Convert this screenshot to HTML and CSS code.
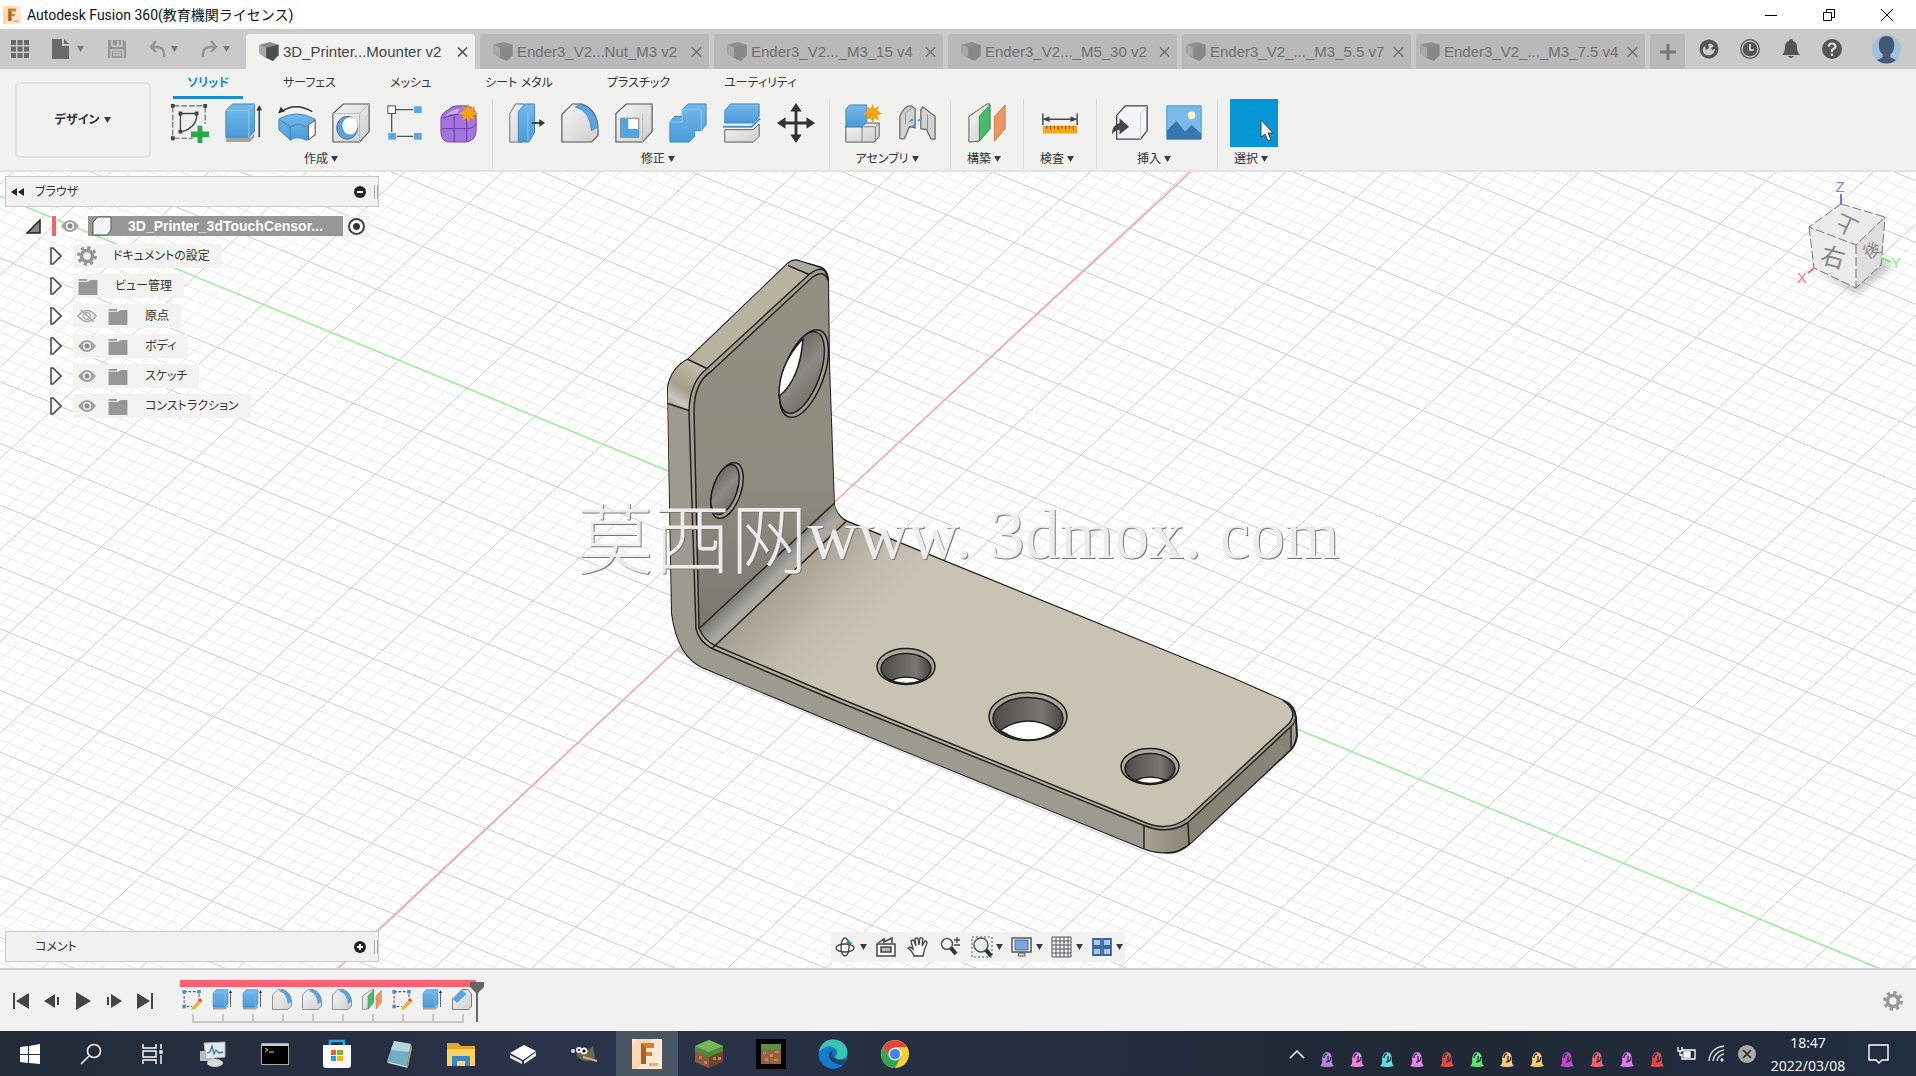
FILE: index.html
```html
<!DOCTYPE html>
<html lang="ja">
<head>
<meta charset="utf-8">
<title>Autodesk Fusion 360</title>
<link rel="stylesheet" href="styles.css">
</head>
<body>
<svg class="defs" aria-hidden="true">
  <defs>
    <linearGradient id="gBlue" x1="0" y1="0" x2="0" y2="1"><stop offset="0" stop-color="#74b9ea"/><stop offset="1" stop-color="#4a9bdb"/></linearGradient>
    <linearGradient id="gGrey" x1="0" y1="0" x2="1" y2="1"><stop offset="0" stop-color="#f6f6f6"/><stop offset="1" stop-color="#cfcfcf"/></linearGradient>
    <symbol id="doc" viewBox="0 0 20 20"><path d="M0 3 11 0l9 3v11l-6 6-7-3-7-5z" fill="#8e8e8e"/><path d="M7 6 20 3v11l-6 6-7-4z" fill="currentColor"/><path d="M0 3l7 3v10l-7-4z" fill="#a9a9a9"/></symbol>
    <symbol id="eye" viewBox="0 0 20 14"><path d="M1 7Q10-5 19 7 10 19 1 7z" fill="#a3a3a3"/><circle cx="10" cy="7" r="4" fill="#f1f1f1"/><circle cx="10" cy="7" r="2.500" fill="#8a8a8a"/></symbol>
    <symbol id="eyeoff" viewBox="0 0 20 14"><path d="M1 7Q10-4 19 7 10 18 1 7z" fill="none" stroke="#a8a8a8" stroke-width="1.300"/><circle cx="10" cy="7" r="3.500" fill="none" stroke="#a8a8a8" stroke-width="1.300"/><path d="M4 1l13 12" stroke="#a8a8a8" stroke-width="1.500"/></symbol>
    <symbol id="folder" viewBox="0 0 22 18"><path d="M1 1h9v2H1zM1 4h10l3-2h7v16H1z" fill="#979797"/></symbol>
    <symbol id="gear" viewBox="0 0 20 20"><circle cx="10" cy="10" r="5.500" fill="none" stroke="#979797" stroke-width="3.600"/><circle cx="10" cy="10" r="8.400" fill="none" stroke="#979797" stroke-width="3" stroke-dasharray="3.300 3.300"/></symbol>
    <symbol id="tri" viewBox="0 0 12 18"><path d="M1 1h2l8 8-8 8H1z" fill="#fafafa" stroke="#4a4a4a" stroke-width="1.600"/></symbol>
    <symbol id="caret" viewBox="0 0 8 7"><path d="M0 0h8L4 7z" fill="currentColor"/></symbol>
    <symbol id="cross" viewBox="0 0 12 12"><path d="M1 1l10 10M11 1L1 11" stroke="currentColor" stroke-width="1.500"/></symbol>
    <symbol id="extrude" viewBox="0 0 40 42"><path d="M2 36h26l4-5v5l-5 5H2z" fill="#a5a5a5"/><path d="M2 8 9 1h23v29l-6 6H2z" fill="url(#gBlue)" stroke="#3d86c0"/><path d="M2 8h24v28M26 8l6-7" fill="none" stroke="#8fcaf3"/><path d="M37 36V5" stroke="#333" stroke-width="1.500"/><path d="M34 8l3-6 3 6z" fill="#333"/></symbol>
    <symbol id="fillet" viewBox="0 0 40 42"><path d="M1 41V12L12 1h10q17 6 17 28v5l-7 7z" fill="url(#gGrey)" stroke="#555" stroke-width="1.200"/><path d="M15 4 20 1q17 5 19 24l-7 4Q31 9 15 4z" fill="#58a5e0" stroke="#3681bd" stroke-width=".8"/></symbol>
    <symbol id="planes" viewBox="0 0 40 42"><path d="M1 41V14L20 1h3v26L12 40z" fill="url(#gGrey)" stroke="#555"/><path d="M12 40V14L23 2v25z" fill="#45bd6d" stroke="#239a4d"/><path d="M28 40V14L39 2v25z" fill="#e99567" stroke="#db7641"/></symbol>
    <symbol id="sketch" viewBox="0 0 24 24"><path d="M3 3h17v13M3 3v17h9" fill="none" stroke="#555" stroke-width="1.200" stroke-dasharray="3 2"/><path d="M1 1h4v4H1zM18 1h4v4h-4zM1 18h4v4H1z" fill="#4b8dd8"/><path d="M12 21l8-9 3 3-8 8-4 1z" fill="#efb040"/><path d="M19 13l2-3 3 3-2 2z" fill="#ea5667"/></symbol>
    <symbol id="spark" viewBox="0 0 20 20"><path d="M10 0l2 5 5-3-2 5 5 3-5 2 2 5-5-2-2 5-2-5-5 2 2-5-5-2 5-3-2-5 5 3z" fill="#f7a30c"/></symbol>
    <symbol id="ghost" viewBox="0 0 16 18"><path d="M1 16q3-2 2-7Q4 2 8 2t5 6q-1 5 2 8-3 1-7 1t-7-1z" fill="currentColor"/><path d="M5 8q0-4 3-4M9 6v5M12 7q0 5-5 5" fill="none" stroke="#2e2e4b" stroke-width="1.300"/></symbol>
    <symbol id="fusion" viewBox="0 0 30 30"><path d="M0 0h30v30H0z" fill="#fee8d3"/><path d="M4 0h16L6 30H0V8z" fill="#fbd0aa" opacity=".7"/><path d="M9 25V4h13v5h-8v4h6v4h-6v8z" fill="#d4822b"/><path d="M9 25V4l5 5v16z" fill="#a96321"/><path d="M17 24h9v3h-9z" fill="#edae79"/></symbol>
  </defs>
</svg>

<header class="titlebar">
  <svg class="i18"><use href="#fusion"/></svg>
  <h1>Autodesk Fusion 360(教育機関ライセンス)</h1>
  <div class="wincontrols">
    <button aria-label="最小化"><svg width="14" height="14"><path d="M1 7.500h12" stroke="#000"/></svg></button>
    <button aria-label="元に戻す"><svg width="14" height="14" fill="none" stroke="#000"><path d="M1.500 4.500h8v8h-8zM4.500 4V1.500h8v8H10"/></svg></button>
    <button aria-label="閉じる"><svg width="14" height="14"><path d="M1 1l12 12M13 1L1 13" stroke="#000"/></svg></button>
  </div>
</header>

<div class="tabbar">
  <div class="quick">
    <button class="q1" aria-label="データパネル"><svg width="18" height="18" fill="#6a6a6a"><path d="M0 0h5v5H0zM6.500 0h5v5h-5zM13 0h5v5h-5zM0 6.500h5v5H0zM6.500 6.500h5v5h-5zM13 6.500h5v5h-5zM0 13h5v5H0zM6.500 13h5v5h-5zM13 13h5v5h-5z"/></svg></button>
    <button class="q2" aria-label="ファイル"><svg width="17" height="20"><path d="M0 0h10v7h7v13H0zM12 0l5 5h-5z" fill="#6a6a6a"/></svg><svg class="car"><use href="#caret"/></svg></button>
    <button class="q3" aria-label="保存"><svg width="18" height="18"><path d="M0 0h16l2 2v16H0z" fill="#969696"/><path d="M4 0v6h10V0M3 18V10h12v8M5 12.500h8M5 15h8M10 1v4" fill="none" stroke="#cacaca" stroke-width="1.500"/></svg></button>
    <button class="q4" aria-label="元に戻す"><svg width="17" height="18" fill="none" stroke="#969696" stroke-width="2.400"><path d="M7 1L2 7l5 5M2 7h7q7 1 6 10"/></svg><svg class="car"><use href="#caret"/></svg></button>
    <button class="q4" aria-label="やり直し"><svg width="17" height="18" fill="none" stroke="#969696" stroke-width="2.400"><path d="M10 1l5 6-5 5M15 7H8Q1 8 2 17"/></svg><svg class="car"><use href="#caret"/></svg></button>
  </div>
  <div class="tabs">
    <div class="tab on"><svg><use href="#doc"/></svg><span>3D_Printer...Mounter v2</span><button aria-label="閉じる"><svg><use href="#cross"/></svg></button></div>
    <div class="tab"><svg><use href="#doc"/></svg><span>Ender3_V2...Nut_M3 v2</span><button aria-label="閉じる"><svg><use href="#cross"/></svg></button></div>
    <div class="tab"><svg><use href="#doc"/></svg><span>Ender3_V2..._M3_15 v4</span><button aria-label="閉じる"><svg><use href="#cross"/></svg></button></div>
    <div class="tab"><svg><use href="#doc"/></svg><span>Ender3_V2..._M5_30 v2</span><button aria-label="閉じる"><svg><use href="#cross"/></svg></button></div>
    <div class="tab tight"><svg><use href="#doc"/></svg><span>Ender3_V2_..._M3_5.5 v7</span><button aria-label="閉じる"><svg><use href="#cross"/></svg></button></div>
    <div class="tab tight"><svg><use href="#doc"/></svg><span>Ender3_V2_..._M3_7.5 v4</span><button aria-label="閉じる"><svg><use href="#cross"/></svg></button></div>
    <button class="plus" aria-label="新規"><svg width="18" height="18"><path d="M9 1v16M1 9h16" stroke="#777" stroke-width="3"/></svg></button>
  </div>
  <div class="account">
    <button aria-label="拡張機能"><svg viewBox="0 0 20 20"><circle cx="10" cy="10" r="9.500" fill="#555"/><path d="M10 16a5 5 0 0 1-4-9l1 4 3-2-1-4q4-1 6 2l-3 2 1 2 3-1q-1 6-6 6z" fill="#cacaca"/></svg></button>
    <button aria-label="ジョブの状態"><svg viewBox="0 0 20 20"><circle cx="10" cy="10" r="9.300" fill="none" stroke="#555" stroke-width="1.300"/><circle cx="10" cy="10" r="7.300" fill="#555"/><path d="M10 5v6h4" fill="none" stroke="#ddd" stroke-width="1.700"/></svg></button>
    <button aria-label="通知"><svg viewBox="0 0 20 20"><path d="M10 0q2 0 2 2 4 1 4 6 0 5 3 8H1q3-3 3-8 0-5 4-6 0-2 2-2zM7 17h6q-3 4-6 0z" fill="#555"/></svg></button>
    <button aria-label="ヘルプ"><svg viewBox="0 0 20 20"><circle cx="10" cy="10" r="10" fill="#555"/><path d="M6.500 7.500Q7 4.500 10 4.500t3.500 3Q13.500 9 10 11v2M10 14.500v2.500" fill="none" stroke="#ddd" stroke-width="2.200"/></svg></button>
    <button class="avatar" aria-label="アカウント"><svg viewBox="0 0 30 30"><circle cx="15" cy="15" r="15" fill="#a5bfdf"/><path d="M7 10Q7 1 15 1t8 9q0 7-4 10v3l6 3q-10 7-20 0l6-3v-3q-4-3-4-10z" fill="#465972"/></svg></button>
  </div>
</div>

<section class="ribbon">
  <button class="workspace">デザイン<svg class="car"><use href="#caret"/></svg></button>
  <div class="ribbon-main">
    <nav class="rtabs">
      <a href="#" class="on">ソリッド</a><a href="#">サーフェス</a><a href="#">メッシュ</a><a href="#">シート メタル</a><a href="#">プラスチック</a><a href="#">ユーティリティ</a>
    </nav>
    <div class="groups">
      <div class="group">
        <div class="tools">
          <button aria-label="スケッチを作成"><svg viewBox="0 0 40 42"><path d="M4 3h32M3 4v32M4 37h20M37 4v18" stroke="#666" stroke-width="1.200" stroke-dasharray="6 2"/><path d="M11 11h17M11 11v20M28 11q1 14-15 19" fill="none" stroke="#444" stroke-width="1.400"/><path d="M1 1h4v4H1zM35 1h4v4h-4zM1 35h4v4H1zM9 9h4v4H9zM26 9h4v4h-4zM9 28h4v4H9z" fill="#444"/><path d="M29 24h5v6h7v6h-7v6h-5v-6h-7v-6h7z" fill="#27a84c"/></svg></button>
          <button aria-label="押し出し"><svg><use href="#extrude"/></svg></button>
          <button aria-label="回転"><svg viewBox="0 0 40 42"><path d="M1 17q18-11 38 0v17l-9 5q-11-5-17 0L1 28z" fill="url(#gBlue)" stroke="#3d86c0"/><path d="M1 17l12 8v14M13 25q8-5 17 0" fill="none" stroke="#3d86c0"/><path d="M32 23l7-5v15l-7 6z" fill="#fff" stroke="#555"/><path d="M4 9q14-10 32 0" fill="none" stroke="#333" stroke-width="1.500"/><path d="M0 11l3-7 4 5z" fill="#333"/></svg></button>
          <button aria-label="穴"><svg viewBox="0 0 40 42"><path d="M1 41V11L12 1h27v29L29 41z" fill="url(#gGrey)" stroke="#555" stroke-width="1.200"/><path d="M1 11h28v30M29 11L39 1" fill="none" stroke="#bbb"/><ellipse cx="16" cy="26" rx="11" ry="12" fill="#58a5e0" stroke="#666"/><ellipse cx="19" cy="24" rx="8" ry="9" fill="#fff"/></svg></button>
          <button aria-label="パターン"><svg viewBox="0 0 40 42"><path d="M6 7h28M6 7v28h28" fill="none" stroke="#555" stroke-width="1.400"/><path d="M2 3h8v8H2z" fill="#fff" stroke="#444"/><path d="M29 3h9v8h-9zM2 31h9v8H2zM29 31h9v8h-9z" fill="#5aa7e2" stroke="#f1f1f0"/></svg></button>
          <button aria-label="フォームを作成"><svg viewBox="0 0 40 42"><path d="M1 17q0-6 8-10 3-4 10-4h10q10 3 9 12v15q-1 10-11 11H12Q1 42 1 30z" fill="#a374dd" stroke="#7646b6"/><path d="M3 16q10-4 16-4M15 14v27M2 27h26q7 0 10-5M28 13v28" fill="none" stroke="#7342b4" stroke-width="1.300"/><path d="M5 15q6-9 16-9l-3 5q-9 0-13 4z" fill="#cbb0ee"/><use href="#spark" x="20" y="1" width="20" height="20"/></svg></button>
        </div>
        <button class="gl">作成<svg class="car"><use href="#caret"/></svg></button>
      </div>
      <div class="group">
        <div class="tools">
          <button aria-label="プレス/プル"><svg viewBox="0 0 40 42"><path d="M3 41V11L9 1h9v38l-3 2z" fill="url(#gGrey)" stroke="#666"/><path d="M12 41V9l7-8h10v30l-6 10z" fill="url(#gBlue)" stroke="#3d86c0"/><path d="M22 10v30" stroke="#8fcaf3"/><path d="M26 21h9" stroke="#333" stroke-width="1.800"/><path d="M34 17l6 4-6 4z" fill="#333"/></svg></button>
          <button aria-label="フィレット"><svg><use href="#fillet"/></svg></button>
          <button aria-label="シェル"><svg viewBox="0 0 40 42"><path d="M1 41V11L12 1h27v29L29 41z" fill="url(#gGrey)" stroke="#555" stroke-width="1.200"/><path d="M6 16h19v20H6z" fill="#fff" stroke="#777"/><path d="M6 16h8v11h11v9H6z" fill="#55a5df"/><path d="M29 11v30" stroke="#bbb"/></svg></button>
          <button aria-label="結合"><svg viewBox="0 0 40 42"><path d="M1 41V20l5-6h8V7l6-6h19v22l-5 6h-7v6l-6 6z" fill="url(#gBlue)" stroke="#3d86c0"/><path d="M1 20h13V7h20v22" fill="none" stroke="#8fcaf3"/></svg></button>
          <button aria-label="分割"><svg viewBox="0 0 40 42"><path d="M2 8l6-7h30v13l-6 7H2z" fill="url(#gBlue)" stroke="#3d86c0"/><path d="M0 25h30l9-9" fill="none" stroke="#4798d6" stroke-width="2"/><path d="M2 28h30l6-6v13l-6 6H2z" fill="url(#gGrey)" stroke="#555"/></svg></button>
          <button aria-label="移動"><svg viewBox="0 0 40 42"><path d="M20 6v30M5 21h30" stroke="#333" stroke-width="3"/><path d="M14 9l6-9 6 9zM14 33l6 9 6-9zM9 15l-9 6 9 6zM31 15l9 6-9 6z" fill="#333"/></svg></button>
        </div>
        <button class="gl">修正<svg class="car"><use href="#caret"/></svg></button>
      </div>
      <div class="group">
        <div class="tools">
          <button aria-label="新規コンポーネント"><svg viewBox="0 0 40 42"><path d="M2 41V25h17v-4h18v14l-5 6z" fill="url(#gGrey)" stroke="#555"/><path d="M19 25v16M19 25h14v16M33 25l4-4" fill="none" stroke="#777"/><path d="M2 7l4-5h18v18l-5 5H2z" fill="url(#gBlue)" stroke="#3d86c0"/><use href="#spark" x="20" y="1" width="20" height="20"/></svg></button>
          <button aria-label="ジョイント"><svg viewBox="0 0 40 42"><path d="M2 37V14Q7 2 14 3l4 3v20l-6-1-5 12-3 1zM39 38V14L26 4l-2 3v20l6 1 5 10z" fill="#d3d3d3" stroke="#666" stroke-width="1.300"/><path d="M8 22V10l7-5M31 12v16" fill="none" stroke="#888"/><path d="M12 20l4-3M25 16l-4 3M14 25l4-2" stroke="#4b9fdf" stroke-width="2"/></svg></button>
        </div>
        <button class="gl">アセンブリ<svg class="car"><use href="#caret"/></svg></button>
      </div>
      <div class="group one">
        <div class="tools"><button aria-label="オフセット平面"><svg><use href="#planes"/></svg></button></div>
        <button class="gl">構築<svg class="car"><use href="#caret"/></svg></button>
      </div>
      <div class="group one">
        <div class="tools"><button aria-label="計測"><svg viewBox="0 0 40 42"><path d="M2 11v12M38 11v12M3 17h34" stroke="#444" stroke-width="1.500"/><path d="M2 17l7-3v6zM38 17l-7-3v6z" fill="#444"/><path d="M2 24h36v8H2z" fill="#f6a51c"/><path d="M6 24v3m4-3v4m4-4v3m4-3v4m4-4v3m4-3v4m4-4v3m4-3v4" stroke="#6b4a10"/></svg></button></div>
        <button class="gl">検査<svg class="car"><use href="#caret"/></svg></button>
      </div>
      <div class="group">
        <div class="tools">
          <button aria-label="派生を挿入"><svg viewBox="0 0 40 42"><path d="M6 38V13L15 3h23v26l-7 9z" fill="#f3f5fa" stroke="#444" stroke-width="1.400"/><path d="M31 11v27M31 11l7-8" stroke="#c9ccd5"/><path d="M1 33q0-10 8-12v-5l10 9-10 8v-5q-5 0-8 5z" fill="#444"/></svg></button>
          <button aria-label="キャンバス"><svg viewBox="0 0 40 42"><path d="M2 3h36v35H2z" fill="#79bbeb" stroke="#4d8dbd"/><path d="M2 29l10-10 9 11 7-7 10 9v6H2z" fill="#3478ae"/><circle cx="28" cy="13" r="4" fill="#fbf6b8"/></svg></button>
        </div>
        <button class="gl">挿入<svg class="car"><use href="#caret"/></svg></button>
      </div>
      <div class="group one last">
        <div class="tools"><button class="picked" aria-label="選択"><svg viewBox="0 0 48 48"><path d="M8 8h26v26H8z" fill="none" stroke="#109bc4" stroke-dasharray="3 2"/><path d="M31 21v17l4-3 3 7 3-1-3-7h5z" fill="#fff" stroke="#444"/></svg></button></div>
        <button class="gl">選択<svg class="car"><use href="#caret"/></svg></button>
      </div>
    </div>
  </div>
</section>

<main class="stage">
  <svg class="scene" viewBox="0 171 1916 797" preserveAspectRatio="xMidYMid slice" aria-label="モデル">
    <defs>
      <linearGradient id="mFace" x1="0" y1="0" x2="0" y2="1"><stop offset="0" stop-color="#928f83"/><stop offset=".6" stop-color="#8e8b80"/><stop offset="1" stop-color="#7a7771"/></linearGradient>
      <linearGradient id="mFloor" gradientUnits="userSpaceOnUse" x1="770" y1="575" x2="850" y2="650"><stop offset="0" stop-color="#a19b8f"/><stop offset=".6" stop-color="#c1bbad"/><stop offset="1" stop-color="#c9c3b4"/></linearGradient>
      <linearGradient id="mBend" gradientUnits="userSpaceOnUse" x1="760" y1="568" x2="780" y2="588"><stop offset="0" stop-color="#77746d"/><stop offset=".55" stop-color="#a4a6a3"/><stop offset=".8" stop-color="#b3a996"/><stop offset="1" stop-color="#9f998d"/></linearGradient>
      <linearGradient id="mCorner" x1="0" y1="1" x2=".5" y2="0"><stop offset="0" stop-color="#8c8c87"/><stop offset=".25" stop-color="#c9c9c2"/><stop offset=".5" stop-color="#a79d8c"/><stop offset="1" stop-color="#c3baa8"/></linearGradient>
      <linearGradient id="mHole" x1="0" y1="0" x2="1" y2="0"><stop offset="0" stop-color="#4d4b47"/><stop offset=".7" stop-color="#7a7872"/><stop offset="1" stop-color="#454440"/></linearGradient>
      <linearGradient id="mBore" x1="0" y1="0" x2="1" y2="1"><stop offset="0" stop-color="#5f5d58"/><stop offset=".5" stop-color="#8d8b85"/><stop offset="1" stop-color="#6a6861"/></linearGradient>
      <linearGradient id="mEnd" x1="0" y1="0" x2="1" y2="0"><stop offset="0" stop-color="#aaa497"/><stop offset=".4" stop-color="#9c968a"/><stop offset="1" stop-color="#8a8679"/></linearGradient>
    </defs>
    <path id="minor" class="minor"/>
    <path id="major" class="major"/>
    <path d="M338 968 678 648 833 503 1191 171" class="axis-x"/>
    <path d="M-60 171 667 470 1296 728 1880 968" class="axis-y"/>
    <path d="M675 650l35 18-8-28z" fill="#cfcfcf"/>
    <g>
      <path d="M788 263q6-5 12-2l21 6q6 3 7 11l1 85 5 142q3 11 13 16l386 157 50 22q12 5 13 17l1 18q-1 8-5 13l-102 95q-12 11-25 9-11 0-21-4L840 724 703 667q-25-11-31-54l-2-110-2-116q3-19 20-28z" fill="#a39e92" stroke="#1d1d1b" stroke-width="2"/>
      <path d="M668 403l21 7 7 218q3 13 16 20l128 54 304 123v23L840 724 703 667q-25-11-31-54z" fill="#9d9a8f"/>
      <path d="M668 403v-16q3-19 20-28l19 9q-17 13-18 42z" fill="url(#mCorner)"/>
      <path d="M688 359l100-96 21 11-102 94z" fill="#b8b2a1"/>
      <path d="M788 263q6-5 12-2l22 7-13 6z" fill="#aaa99f"/>
      <path d="M694 411q0-29 17-40l101-94q12-9 16 3l1 83 5 140-135 124z" fill="url(#mFace)"/>
      <path d="M699 628l135-125q2 12 12 18L712 648q-10-6-13-20z" fill="url(#mBend)"/>
      <path d="M712 648l134-127 387 157 50 22q14 7 7 23l-103 94q-20 15-42 5L840 698z" fill="url(#mFloor)"/>
      <path d="M1144 825q24 10 44-3v22q-22 13-44 4z" fill="url(#mEnd)"/>
      <path d="M1188 822l102-95v22l-100 94z" fill="#878376"/>
      <path d="M696 628q3 13 16 20l128 54 304 123v-3L840 698 715 645q-11-5-16-17z" fill="#b7b1a2"/>
      <g class="edge">
        <path d="M689 410q1-29 18-42l102-94q10-8 16-4M689 410l7 218q3 13 16 20l128 54 304 123q24 10 44-3l102-95q5-4 6-10"/>
        <path d="M694 411q0-29 17-40l101-94q12-9 16 3M694 411l5 217q5 12 16 17l125 53 305 124q24 10 43-5l101-94q10-12-6-23"/>
        <path d="M668 403l21 7M688 359l19 9M788 265l21 9M699 628l135-125M712 648l134-127M1144 825v23M1188 822l1 22M1291 726v22"/>
      </g>
      <g stroke="#1d1d1b" stroke-width="1.500">
        <ellipse cx="804" cy="373" rx="20" ry="46" transform="rotate(20 804 373)" fill="#a19e93"/>
        <ellipse cx="802" cy="372" rx="18" ry="43" transform="rotate(20 802 372)" fill="url(#mBore)"/>
        <path d="M803 338q-3 41-24 58-1-31 24-58z" fill="#fff"/>
        <ellipse cx="727" cy="490" rx="14" ry="29" transform="rotate(19 727 490)" fill="#a19e93"/>
        <ellipse cx="725" cy="489" rx="12" ry="26" transform="rotate(19 725 489)" fill="url(#mBore)"/>
        <ellipse cx="906" cy="666" rx="29" ry="18" fill="#aea89b"/><ellipse cx="906" cy="668" rx="25" ry="15" fill="url(#mHole)"/><path d="M891 680q15-7 31 0-16 6-31 0z" fill="#fff"/>
        <ellipse cx="1028" cy="716" rx="39" ry="24" fill="#aea89b"/><ellipse cx="1028" cy="718" rx="35" ry="21" fill="url(#mHole)"/><path d="M1000 730q28-19 57 0-28 19-57 0z" fill="#fff"/>
        <ellipse cx="1150" cy="766" rx="29" ry="18" fill="#aea89b"/><ellipse cx="1150" cy="768" rx="25" ry="15" fill="url(#mHole)"/><path d="M1135 780q15-7 31 0-16 6-31 0z" fill="#fff"/>
      </g>
    </g>
  </svg>

  <div class="overlay">
    <div class="top">
      <aside class="browser">
        <div class="panel"><button aria-label="折りたたむ"><svg width="13" height="8"><path d="M6 0v8L0 4zM13 0v8L7 4z" fill="#222"/></svg></button><h2>ブラウザ</h2><button class="end" aria-label="閉じる"><svg width="12" height="12"><circle cx="6" cy="6" r="6" fill="#222"/><path d="M3 6h6" stroke="#fff" stroke-width="2"/></svg></button><i></i></div>
        <ul class="tree">
          <li class="root"><svg width="15" height="15"><path d="M14 1v13H1z" fill="#888" stroke="#222" stroke-width="1.500"/></svg><b></b><svg class="eye"><use href="#eye"/></svg><span class="sel"><svg width="20" height="20"><path d="M1 19V6l5-5h13v13l-4 5z" fill="#f4f4f4" stroke="#555"/></svg>3D_Printer_3dTouchCensor...</span><label class="radio"><input type="radio" checked aria-label="アクティブ"></label></li>
          <li><svg class="tw"><use href="#tri"/></svg><span><svg class="g20"><use href="#gear"/></svg>ドキュメントの設定</span></li>
          <li><svg class="tw"><use href="#tri"/></svg><span><svg class="fo"><use href="#folder"/></svg>ビュー管理</span></li>
          <li><svg class="tw"><use href="#tri"/></svg><span><svg class="eye"><use href="#eyeoff"/></svg><svg class="fo"><use href="#folder"/></svg>原点</span></li>
          <li><svg class="tw"><use href="#tri"/></svg><span><svg class="eye"><use href="#eye"/></svg><svg class="fo"><use href="#folder"/></svg>ボディ</span></li>
          <li><svg class="tw"><use href="#tri"/></svg><span><svg class="eye"><use href="#eye"/></svg><svg class="fo"><use href="#folder"/></svg>スケッチ</span></li>
          <li><svg class="tw"><use href="#tri"/></svg><span><svg class="eye"><use href="#eye"/></svg><svg class="fo"><use href="#folder"/></svg>コンストラクション</span></li>
        </ul>
      </aside>
      <svg class="cube" viewBox="1790 176 116 124" width="116" height="124">
        <defs><filter id="soft"><feGaussianBlur stdDeviation="4"/></filter></defs>
        <path d="M1818 268l38 26 36-28-30-20z" fill="#999" opacity=".6" filter="url(#soft)"/>
        <path d="M1841 204l44 13-4 48-25 23-42-20-5-41z" fill="#ececec"/>
        <path d="M1856 245l29-28-4 48-25 23z" fill="#dedede"/>
        <path d="M1841 204l44 13-29 28-47-18zM1856 245v43M1809 227l5 41 42 20 25-23 4-48" fill="none" stroke="#777" stroke-dasharray="9 3"/>
        <path d="M1841 194v10" stroke="#7b6df0" stroke-width="2"/><path d="M1814 268l-6 5" stroke="#ef6a72" stroke-width="2"/><path d="M1881 258l10 4" stroke="#7be87b" stroke-width="2"/>
        <g text-anchor="middle" fill="#888"><text x="1847" y="233" font-size="22" transform="rotate(205 1847 225)">上</text><text x="1833" y="266" font-size="24" transform="rotate(15 1833 258)">右</text><text x="1872" y="256" font-size="17" transform="rotate(-30 1872 250)">後</text></g>
        <g text-anchor="middle" font-size="15" class="ax"><text x="1840" y="192" fill="#8a7ef5">Z</text><text x="1802" y="283" fill="#f47c83">X</text><text x="1896" y="268" fill="#8ff08f">Y</text></g>
      </svg>
    </div>
    <div class="bottom">
      <div class="panel comment"><h2>コメント</h2><button class="end" aria-label="追加"><svg width="12" height="12"><circle cx="6" cy="6" r="6" fill="#222"/><path d="M3 6h6M6 3v6" stroke="#fff" stroke-width="2"/></svg></button><i></i></div>
      <div class="navbar">
        <button class="wide" aria-label="オービット"><svg viewBox="0 0 22 22" fill="#fff" stroke="#444" stroke-width="1.300"><ellipse cx="10" cy="11" rx="4" ry="9"/><ellipse cx="10" cy="12" rx="9" ry="4" fill="none"/><path d="M14 4v6M11 7h6" stroke="#2f74b8"/></svg><svg class="car"><use href="#caret"/></svg></button>
        <button aria-label="ビューを表示"><svg viewBox="0 0 22 22" fill="none" stroke="#444" stroke-width="1.500"><path d="M2 8h18v12H2z" fill="#fff"/><path d="M6 11h10v5H6z" fill="#bbb"/><path d="M3 7l6-4v3l8-4v5"/></svg></button>
        <button aria-label="画面移動"><svg viewBox="0 0 22 22"><path d="M7 20q-1-4-6-8 2-2 5 1L4 5q2-2 3 0l2 5-1-7q2-2 3 0l1 6 1-7q2-1 3 1l-1 7 3-5q2 0 2 2-3 6-4 13z" fill="#fff" stroke="#444" stroke-width="1.300"/></svg></button>
        <button aria-label="ズーム"><svg viewBox="0 0 22 22"><circle cx="8" cy="8" r="5.500" fill="#f7f7f7" stroke="#555" stroke-width="1.500"/><path d="M12 12l5 6" stroke="#333" stroke-width="4"/><path d="M18 1v6M15 4h6M15 9h6" stroke="#444" stroke-width="1.300"/></svg></button>
        <button class="wide" aria-label="フィット"><svg viewBox="0 0 22 22"><path d="M1 1h20v20H1z" fill="none" stroke="#555" stroke-dasharray="2 2"/><circle cx="10" cy="9" r="7" fill="#e9f1ee" stroke="#555" stroke-width="1.500"/><path d="M15 14l5 6" stroke="#333" stroke-width="4"/></svg><svg class="car"><use href="#caret"/></svg></button>
        <button class="wide" aria-label="表示設定"><svg viewBox="0 0 22 22"><path d="M1 2h19v14H1z" fill="#fff" stroke="#555" stroke-width="1.500"/><path d="M4 4h13v10H4z" fill="#7ba7df" stroke="#466b9d"/><path d="M8 17h6v3H7z" fill="#ddd" stroke="#555"/></svg><svg class="car"><use href="#caret"/></svg></button>
        <button class="wide" aria-label="グリッド"><svg viewBox="0 0 22 22"><path d="M1 1h19v20H1zM5 1v20M9 1v20M13 1v20M17 1v20M1 5h19M1 9h19M1 13h19M1 17h19" fill="#f2f2fb" stroke="#555"/></svg><svg class="car"><use href="#caret"/></svg></button>
        <button class="wide" aria-label="ビューポート"><svg viewBox="0 0 22 22"><path d="M2 3h8v7H2zM12 3h8v7h-8zM2 12h8v7H2zM12 12h8v7h-8z" fill="#a9c6ec" stroke="#3f6796" stroke-width="1.800"/></svg><svg class="car"><use href="#caret"/></svg></button>
      </div>
    </div>
  </div>
</main>

<footer class="timeline">
  <div class="play">
    <button aria-label="先頭"><svg viewBox="0 0 18 18"><path d="M1 1h2v16H1zM17 1v16L4 9z"/></svg></button>
    <button aria-label="前へ"><svg viewBox="0 0 18 18"><path d="M12 2v14L1 9zM14 5h2v8h-2z"/></svg></button>
    <button aria-label="再生"><svg viewBox="0 0 18 18"><path d="M2 0v18l15-9z"/></svg></button>
    <button aria-label="次へ"><svg viewBox="0 0 18 18"><path d="M6 2v14l11-7zM2 5h2v8H2z"/></svg></button>
    <button aria-label="末尾"><svg viewBox="0 0 18 18"><path d="M15 1h2v16h-2zM1 1v16l13-8z"/></svg></button>
  </div>
  <div class="track">
    <div class="red"></div>
    <div class="feats">
      <svg><use href="#sketch"/></svg><svg><use href="#extrude"/></svg><svg><use href="#extrude"/></svg><svg><use href="#fillet"/></svg><svg><use href="#fillet"/></svg><svg><use href="#fillet"/></svg><svg><use href="#planes"/></svg><svg><use href="#sketch"/></svg><svg><use href="#extrude"/></svg><svg viewBox="0 0 40 42"><path d="M1 41V20L20 1h12l7 9v24l-6 7z" fill="url(#gGrey)" stroke="#555" stroke-width="1.500"/><path d="M2 20 20 2l9 8-19 18z" fill="#58a5e0"/></svg>
    </div>
    <div class="ticks"><i></i><i></i><i></i><i></i><i></i><i></i><i></i><i></i><i></i></div>
    <svg class="marker" width="16" height="40"><path d="M1 0h14v5L9 11v29H7V11L1 5z" fill="#666"/></svg>
  </div>
  <button class="set" aria-label="設定"><svg class="g20"><use href="#gear"/></svg></button>
</footer>

<div class="taskbar">
  <div class="apps">
    <button class="n" aria-label="スタート"><svg width="20" height="20" fill="#fff"><path d="M0 3l8-1v8H0zM9 2l11-2v10H9zM0 11h8v8l-8-1zM9 11h11v9L9 19z"/></svg></button>
    <button class="n" aria-label="検索"><svg width="22" height="22" fill="none" stroke="#fff" stroke-width="1.500"><circle cx="14" cy="8" r="6.500"/><path d="M9 13l-8 8"/></svg></button>
    <button class="n" aria-label="タスクビュー"><svg width="22" height="20" fill="none" stroke="#fff" stroke-width="1.400"><path d="M2 0v4h13V0M2 20v-4h13v4M2 7h13v6H2zM20 0v5M20 11v9"/><path d="M19 7h2v2h-2z"/></svg></button>
    <button aria-label="モニター"><svg width="28" height="28"><path d="M1 11h14v10H1z" fill="#b9c0c4"/><path d="M5 3l21-1v15l-19 2z" fill="#e4ebef" stroke="#a9b3b8"/><path d="M8 13l3-1 2-6 2 8 2-4 3 3 4-1" fill="none" stroke="#3279a8" stroke-width="1.300"/><ellipse cx="16" cy="23" rx="8" ry="4" fill="#d6d9da"/></svg></button>
    <button aria-label="端末"><svg width="28" height="22"><path d="M.5.500h27v21H.5z" fill="#000" stroke="#aaa"/><path d="M1 2h26" stroke="#ccc" stroke-width="2"/><path d="M4 5l3 2-3 2M8 9h5" fill="none" stroke="#ccc"/></svg></button>
    <button aria-label="ストア"><svg width="30" height="30"><path d="M8 8V2h14v6" fill="none" stroke="#29a5e5" stroke-width="2.500"/><path d="M1 6h28v20q0 3-3 3H4q-3 0-3-3z" fill="#fafafa"/><path d="M9 11h5v5H9z" fill="#ed5a32"/><path d="M15 11h6v5h-6z" fill="#7fba26"/><path d="M9 17h5v5H9z" fill="#28a0df"/><path d="M15 17h6v5h-6z" fill="#f5b51f"/></svg></button>
    <button aria-label="メモ帳"><svg width="28" height="28"><path d="M9 1l17 3-4 22-20-5z" fill="#6fb0c2"/><path d="M9 1l17 3-2 8L6 10z" fill="#b5d6dc"/><path d="M2 21l20 5 1 2-20-5z" fill="#d9d9d9"/><path d="M26 4l1 4-4 19-1-1z" fill="#b4a56b"/></svg></button>
    <button aria-label="エクスプローラー"><svg width="30" height="26"><path d="M1 2h11l3 3h14v20H1z" fill="#e5a72a"/><path d="M1 8h28v17H1z" fill="#fbd35e"/><path d="M6 25V15h18v10h-5v-5h-8v5z" fill="#3b88c8"/></svg></button>
    <button aria-label="ドライブ"><svg width="28" height="22"><path d="M1 10L15 2l12 6-13 9z" fill="#fff"/><path d="M1 12l12 6v3L1 15zM15 18l12-9v4L15 21z" fill="#e9e9e9"/></svg></button>
    <button aria-label="GIMP"><svg width="30" height="22"><path d="M7 8q5 5 16-5l2 12q-6 5-13 2-7-3-5-9z" fill="#6d6350"/><circle cx="3" cy="8" r="2" fill="#ddd"/><circle cx="9" cy="7" r="3" fill="#eee"/><circle cx="14" cy="8" r="3.500" fill="#eee"/><circle cx="9" cy="7" r="1" /><circle cx="14" cy="8" r="1.500"/><path d="M13 14l14 4" stroke="#ccb680" stroke-width="2"/></svg></button>
    <button class="cur" aria-label="Fusion 360"><svg width="30" height="30"><use href="#fusion"/></svg></button>
    <button aria-label="Minecraft"><svg width="30" height="30"><path d="M1 8l14 6v15L1 23z" fill="#8a5c3d"/><path d="M29 8l-14 6v15l14-6z" fill="#6b452d"/><path d="M15 1l14 6v5l-14 6L1 12V7z" fill="#4e8c3a"/><path d="M15 1l14 6-14 6L1 7z" fill="#77b655"/><path d="M5 17h3v3H5zM10 22h3v3h-3zM19 18h3v3h-3zM24 18h3v3h-3z" fill="#b98256"/></svg></button>
    <button aria-label="Minecraft"><svg width="30" height="30"><path d="M0 0h30v30H0z"/><path d="M5 5h20v20H5z" fill="#97613b"/><path d="M5 5h20v4l-3 2-3-2-3 3-3-2-3 2-5-2z" fill="#5a9140"/><path d="M7 13h3v2H7zM14 15h3v3h-3zM19 12h4v2h-4zM9 19h3v3H9zM18 20h4v2h-4z" fill="#c08a5c"/></svg></button>
    <button aria-label="Edge"><svg viewBox="0 0 30 30" width="30" height="30"><circle cx="15" cy="15" r="14.500" fill="#1476c6"/><path d="M1 13Q4 0 16 .5 29 2 29.500 14q-1 6-8 6-5 0-4-3 3-2 1-6Q11 3 1 13z" fill="#38c8b0"/><path d="M1 13Q11 4 17 10q-6 0-6 7 1 9 14 9-9 7-18 1Q1 22 1 13z" fill="#127bd2"/><path d="M11 17q0-5 4-6-2 4 1 8 5 4 12 1-1 4-4 6-12-1-13-9z" fill="#222c3d" opacity=".65"/></svg></button>
    <button aria-label="Chrome"><svg viewBox="0 0 30 30" width="30" height="30"><circle cx="15" cy="15" r="14" fill="#fbce34"/><path d="M3 8a14 14 0 0 1 24 0H15l-6 10z" fill="#e5443a"/><path d="M3 8a14 14 0 0 0 12 21l6-11H9z" fill="#30a552"/><circle cx="15" cy="15" r="6.500" fill="#fff"/><circle cx="15" cy="15" r="5.200" fill="#4384ee"/></svg></button>
  </div>
  <div class="tray">
    <button aria-label="表示"><svg width="16" height="10"><path d="M1 9l7-7 7 7" fill="none" stroke="#fff" stroke-width="1.500"/></svg></button>
    <svg class="gh" color="#b787dd"><use href="#ghost"/></svg><svg class="gh" color="#ee81dc"><use href="#ghost"/></svg><svg class="gh" color="#5ce3dc"><use href="#ghost"/></svg><svg class="gh" color="#e885ec"><use href="#ghost"/></svg><svg class="gh" color="#e04b45"><use href="#ghost"/></svg><svg class="gh" color="#5de570"><use href="#ghost"/></svg><svg class="gh" color="#f3cb7b"><use href="#ghost"/></svg><svg class="gh" color="#f3cf6d"><use href="#ghost"/></svg><svg class="gh" color="#c548cb"><use href="#ghost"/></svg><svg class="gh" color="#ed6467"><use href="#ghost"/></svg><svg class="gh" color="#dc7cec"><use href="#ghost"/></svg><svg class="gh" color="#e64747"><use href="#ghost"/></svg>
    <button aria-label="電源"><svg width="20" height="16" fill="none" stroke="#fff" stroke-width="1.300"><path d="M5 4h13v9H5V8M1 1v4h4V1M3 5v4h2"/><path d="M7 6h6v5H7z" fill="#fff"/></svg></button>
    <button aria-label="ネットワーク"><svg width="18" height="18" fill="none" stroke="#ddd" stroke-width="1.300"><path d="M1 16Q2 3 16 1M5 16Q6 7 16 5M9 16q1-6 7-7"/><circle cx="14" cy="15" r="1" fill="#fff"/></svg></button>
    <button aria-label="状態"><svg width="18" height="18"><circle cx="9" cy="9" r="9" fill="#aaa"/><path d="M5 5l8 8M13 5l-8 8" stroke="#222" stroke-width="1.600"/></svg></button>
    <time>18:47<br>2022/03/08</time>
    <button class="note" aria-label="アクション センター"><svg width="22" height="20"><path d="M1 1h19v15h-6l-3 3-3-3H1z" fill="none" stroke="#fff" stroke-width="1.400"/></svg></button>
  </div>
</div>

<div class="watermark"><span>莫西网</span>www. 3dmox. com</div>
<script src="grid.js"></script>
</body>
</html>
```
FILE: styles.css
```css
* { box-sizing: border-box; }
html, body { height: 100%; }
body {
  margin: 0;
  display: flex;
  flex-direction: column;
  overflow: hidden;
  font: 12px/16px "Liberation Sans", "Noto Sans CJK JP", sans-serif;
  font-feature-settings: "palt";
  color: #333;
  background: #f1f1f0;
}
button {
  display: flex;
  align-items: center;
  justify-content: center;
  padding: 0;
  border: 0;
  background: none;
  color: inherit;
  font: inherit;
  font-feature-settings: inherit;
}
svg { flex: none; display: block; }
h1, h2, ul { margin: 0; padding: 0; font: inherit; }
.defs { position: absolute; width: 0; height: 0; }
.i18 { width: 18px; height: 18px; }
.g20 { width: 20px; height: 20px; }
.car { width: 7px; height: 6px; margin-left: 5px; color: #3c3c3c; }

.titlebar { display: flex; align-items: center; height: 29px; padding-left: 3px; gap: 6px; background: #fff; color: #111; }
.titlebar h1 { font: 14px/20px Roboto, "Noto Sans CJK JP", sans-serif; }
.wincontrols { display: flex; margin-left: auto; }
.wincontrols button { width: 58px; height: 29px; }

.tabbar { display: flex; height: 40px; background: #cacaca; }
.quick { display: flex; align-items: center; width: 246px; padding-left: 11px; }
.quick .car { color: #777; }
.q1 { width: 18px; }
.q2 { margin-left: 23px; }
.q2 .car { margin-left: 8px; }
.q3 { margin-left: 24px; }
.q4 { margin-left: 23px; }
.tabs { display: flex; gap: 5px; padding-top: 5px; }
.tab { display: flex; align-items: center; width: 229px; padding: 0 4px 0 13px; border-radius: 4px 4px 0 0; background: #b9b9b9; color: #707070; font-size: 15px; }
.tab > svg { width: 20px; height: 19px; margin-right: 4px; color: #888; }
.tab.on { background: #f1f1f0; color: #444; }
.tab.on > svg { color: #4c4c4c; }
.tab span { white-space: nowrap; }
.tab button { width: 18px; margin-left: auto; }
.tab button svg { width: 11px; height: 12px; }
.tab.tight { padding: 0 4px; }
.plus { width: 35px; border-radius: 4px 4px 0 0; background: #b9b9b9; }
.account { display: flex; align-items: center; gap: 21px; margin-left: auto; padding-right: 15px; }
.account button svg { width: 20px; height: 20px; }
.account .avatar { margin-left: 9px; }
.account .avatar svg { width: 29px; height: 29px; }

.ribbon { display: flex; height: 103px; padding-left: 15px; border-bottom: 2px solid #e2e2e1; background: #f1f1f0; }
.workspace { width: 136px; height: 76px; margin-top: 13px; border: 2px solid #e3e3e3; border-radius: 5px; font-weight: 700; }
.ribbon-main { flex: 1; margin-left: 5px; }
.rtabs { display: flex; gap: 26px; height: 30px; padding-left: 17px; }
.rtabs a { padding: 6px 14px 0; color: #333; text-decoration: none; white-space: nowrap; border-bottom: 3px solid transparent; }
.rtabs .on { color: #0a8fd0; font-weight: 700; border-color: #1690d0; }
.groups { display: flex; }
.group { position: relative; display: flex; flex-direction: column; align-items: center; padding: 0 6px; border-right: 1px solid #d9d9d9; }
.group.one { padding: 0 9px; }
.group.last { border: 0; }
.tools { display: flex; height: 48px; }
.tools button { width: 54px; }
.tools svg { width: 40px; height: 40px; }
.tools .picked { width: 48px; margin: 0 3px; background: #0696d7; }
.tools .picked svg { width: 48px; height: 48px; }
.gl { height: 22px; padding: 2px 6px 0 0; white-space: nowrap; }
.gl .car { margin-left: 3px; }

.stage { position: relative; flex: 1; display: flex; min-height: 0; background: #fefefe; overflow: hidden; }
.scene { position: absolute; inset: 0; width: 100%; height: 100%; }
.minor { fill: none; stroke: #ebebeb; stroke-width: 1; }
.major { fill: none; stroke: #cecece; stroke-width: 1; }
.axis-x, .axis-y { fill: none; stroke-width: 1.5; }
.axis-x { stroke: #fba3a3; }
.axis-y { stroke: #9ff0a0; }
.edge { fill: none; stroke: #24231f; stroke-width: 1.5; }
.overlay { position: relative; flex: 1; display: flex; flex-direction: column; justify-content: space-between; padding: 4px 5px 6px; }
.top { display: flex; justify-content: space-between; align-items: flex-start; }
.cube { margin-right: 5px; font-family: "Noto Sans CJK JP", sans-serif; }
.ax { font-family: "Liberation Sans", sans-serif; }
.panel { display: flex; align-items: center; width: 374px; height: 31px; padding: 0 0 0 5px; border: 1px solid #c9c9c9; background: #f1f1f1; }
.panel h2 { margin-left: 11px; }
.panel .end { margin-left: auto; }
.panel i { width: 4px; height: 14px; margin-left: 8px; border: 1px solid #aaa; border-width: 0 1px; }
.comment h2 { margin-left: 24px; }
.tree { list-style: none; padding-top: 4px; }
.tree li { display: flex; align-items: center; height: 30px; padding-left: 45px; }
.tree li > span { display: flex; align-items: center; height: 24px; padding: 0 12px 0 4px; margin-left: 11px; background: #f3f3f2; }
.tw { width: 12px; height: 18px; }
.eye { width: 20px; height: 14px; }
.fo { width: 22px; height: 17px; }
.tree .eye + .fo { margin-left: 10px; }
.tree span > svg:last-of-type { margin-right: 16px; }
.tree li.root { padding-left: 21px; }
.root b { width: 4px; height: 20px; margin: 0 4px 0 11px; background: #f5616f; }
.tree .root > .sel { width: 255px; height: 20px; margin-left: 8px; background: #979797; color: #fff; font-weight: 700; font-size: 14px; }
.root .radio { display: flex; padding: 2px 5px; background: #f3f3f2; }
.radio input { appearance: none; width: 17px; height: 17px; margin: 0; border: 2px solid #444; border-radius: 50%; background: radial-gradient(#333 3px, #fff 4px); }
.bottom { display: grid; grid-template-columns: 1fr auto 1fr; align-items: center; }
.navbar { display: flex; align-items: center; gap: 10px; height: 30px; margin-left: 39px; padding: 0 4px; background: #f2f2f1; }
.navbar svg { width: 22px; height: 22px; }
.navbar .car { width: 7px; height: 6px; margin-left: 3px; }
.navbar .wide { margin-right: -2px; }

.timeline { display: flex; height: 63px; border-top: 2px solid #cfcfcf; background: #f1f1f1; }
.play { display: flex; align-items: center; gap: 13px; width: 180px; padding-left: 12px; }
.play svg { width: 18px; height: 18px; fill: #444; }
.track { position: relative; width: 296px; padding-top: 10px; }
.red { height: 7px; background: #fb6170; }
.feats { display: flex; gap: 8px; padding: 2px 0 0 1px; }
.feats svg { width: 22px; height: 21px; }
.ticks { display: flex; width: 272px; margin: 4px 0 0 12px; border: 2px solid #c6c6c6; border-width: 0 0 2px 2px; }
.ticks i { flex: 1; height: 7px; border-right: 2px solid #c6c6c6; }
.marker { position: absolute; right: -9px; top: 12px; }
.set { margin-left: auto; padding-right: 13px; }

.taskbar { display: flex; justify-content: space-between; height: 45px; background: linear-gradient(90deg, #222b38, #2a3349 30%, #232c3c 60%, #1f2834 75%, #222d40); color: #fff; }
.apps, .tray { display: flex; }
.apps button { width: 62px; }
.apps .n { width: 60px; }
.apps .n + .n { width: 61px; }
.apps .cur { background: #4b5665; }
.tray { align-items: center; }
.tray button { width: 30px; }
.gh { width: 18px; height: 18px; margin: 10px 6px 0; }
.tray time { width: 92px; text-align: center; font: 14px/23px "Open Sans", sans-serif; }
.tray .note { width: 50px; margin-right: 12px; }

.watermark {
  position: fixed;
  inset: 0;
  display: flex;
  align-items: center;
  justify-content: center;
  padding-bottom: 6px;
  pointer-events: none;
  white-space: pre;
  font: 70px/80px "Liberation Serif", serif;
  color: rgba(248, 248, 246, .9);
  text-shadow: 1px 1px 0 #777;
}
.watermark span { font: 300 77px/80px "Noto Sans CJK SC", sans-serif; }
```
FILE: grid.js
```js
// Ground grid: u runs along the green axis, v along the red one.
const origin = [807, 527.5], u = [68, 27.95], v = [45.9, -42.9];
const at = (a, b) => (origin[0] + a * u[0] + b * v[0]).toFixed(1) + ' ' + (origin[1] + a * u[1] + b * v[1]).toFixed(1);
let minor = '', major = '';
for (let i = -150; i <= 150; i++) {
  const k = i / 5;
  const d = 'M' + at(k, -40) + 'L' + at(k, 40) + 'M' + at(-40, k) + 'L' + at(40, k);
  if (i % 5) minor += d; else major += d;
}
document.getElementById('minor').setAttribute('d', minor);
document.getElementById('major').setAttribute('d', major);
```
